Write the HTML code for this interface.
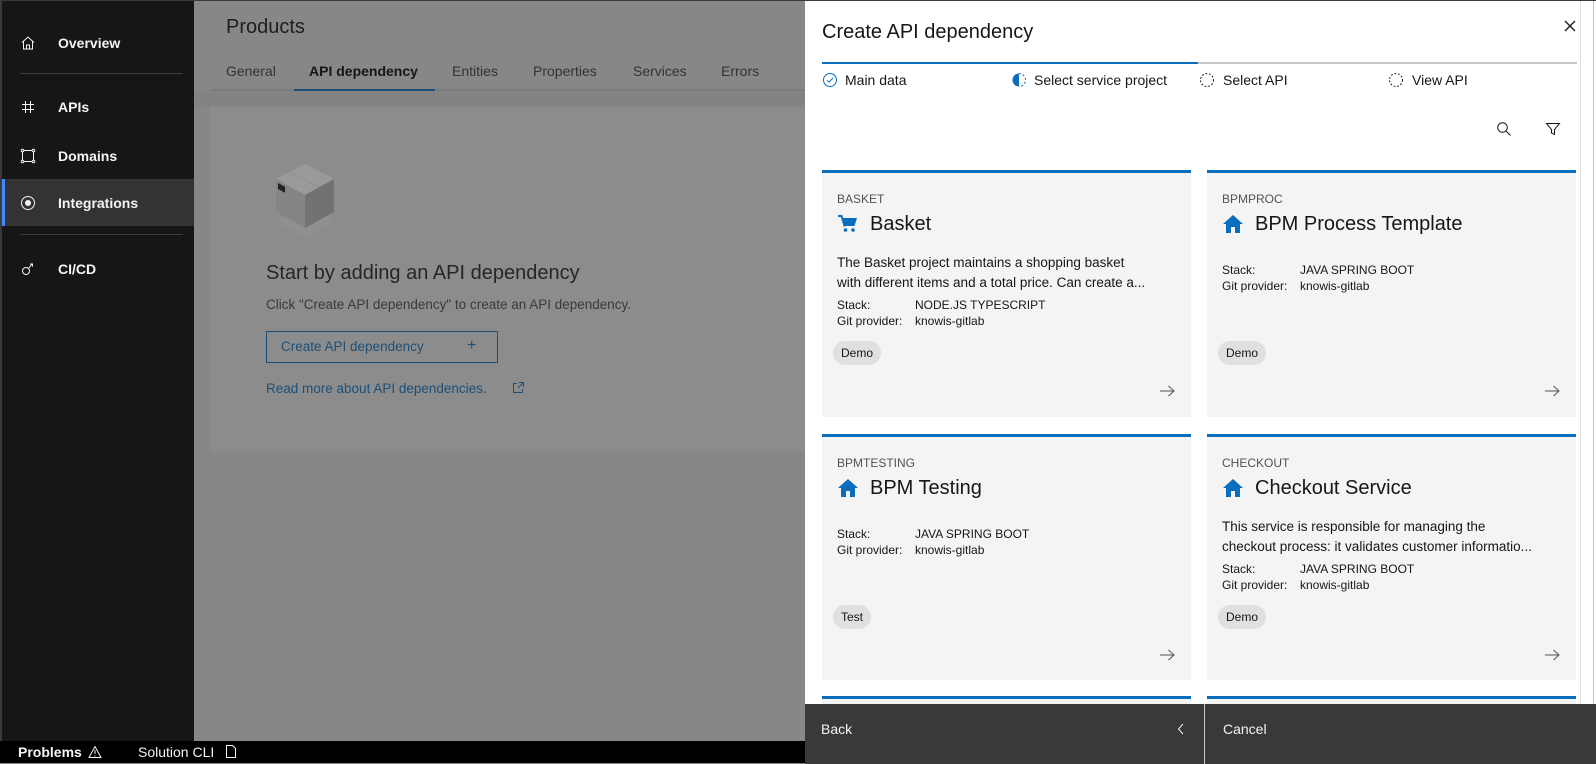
<!DOCTYPE html>
<html><head><meta charset="utf-8"><style>
*{box-sizing:border-box;margin:0;padding:0}
body{width:1596px;height:763px;overflow:hidden;position:relative;font-family:"Liberation Sans",sans-serif;background:#868686}
.abs{position:absolute}
.side{left:0;top:0;width:194px;height:741px;background:#161616;border-left:2px solid #3a3a3a;border-top:1px solid #3a3a3a}
.nav{position:absolute;left:0;width:192px;height:46px;color:#f4f4f4;font-size:14px;font-weight:bold}
.nav span{position:absolute;left:56px;top:50%;transform:translateY(-50%)}
.nav svg{position:absolute;left:18px;top:50%;transform:translateY(-50%)}
.div{position:absolute;left:18px;width:163px;height:1px;background:#3d3d3d}
.status{left:0;top:741px;width:1596px;height:22px;background:#000;color:#f4f4f4;font-size:14px}
.main{left:194px;top:0;width:611px;height:741px;background:#878787;border-top:1px solid #3a3a3a}
.t{position:absolute;white-space:nowrap}
.panel{left:805px;top:0;width:791px;height:763px;background:#fff;border-top:1px solid #3a3a3a}
.card{position:absolute;width:369px;background:#f4f4f4;border-top:3px solid #0a6ebd}
.card .lbl{position:absolute;left:15px;top:19px;font-size:12px;color:#525252}
.card .ttl{position:absolute;left:48px;top:40px;font-size:20px;color:#161616}
.card .ico{position:absolute;left:16px;top:42px}
.card .desc{position:absolute;left:15px;top:80px;font-size:13.5px;line-height:20px;color:#161616;white-space:nowrap}
.card .meta{position:absolute;left:15px;font-size:12px;line-height:16px;color:#161616}
.card .meta b{font-weight:normal;display:inline-block;width:78px}
.card .tag{position:absolute;left:11px;top:168px;height:24px;padding:0 8px;border-radius:12px;background:#e0e0e0;font-size:12px;line-height:24px;color:#161616}
.card .arr{position:absolute;right:16px;top:212px}
</style></head><body>

<div class="abs side">
  <div class="nav" style="top:19px"><svg width="16" height="16" viewBox="0 0 16 16" fill="none" stroke="#f4f4f4" stroke-width="1"><path d="M2 7.5L8 2l6 5.5M3.5 6.5V14h9V6.5M6.5 14v-4h3v4"/></svg><span>Overview</span></div>
  <div class="div" style="top:72px"></div>
  <div class="nav" style="top:83px"><svg width="16" height="16" viewBox="0 0 16 16" fill="none" stroke="#f4f4f4"><path d="M5.5 2v12M10.5 2v12M2 5.5h12M2 10.5h12"/></svg><span>APIs</span></div>
  <div class="nav" style="top:132px"><svg width="16" height="16" viewBox="0 0 16 16" fill="none" stroke="#f4f4f4"><rect x="2.5" y="2.5" width="11" height="11"/><circle cx="2.5" cy="2.5" r="1.3" fill="#161616"/><circle cx="13.5" cy="2.5" r="1.3" fill="#161616"/><circle cx="2.5" cy="13.5" r="1.3" fill="#161616"/><circle cx="13.5" cy="13.5" r="1.3" fill="#161616"/></svg><span>Domains</span></div>
  <div class="nav" style="top:178px;background:#333;height:47px"><div style="position:absolute;left:0;top:0;width:3px;height:47px;background:#4589ff"></div><svg width="16" height="16" viewBox="0 0 16 16" fill="none" stroke="#f4f4f4"><circle cx="8" cy="8" r="6.5"/><circle cx="8" cy="8" r="2.5" fill="#f4f4f4"/></svg><span>Integrations</span></div>
  <div class="div" style="top:233px"></div>
  <div class="nav" style="top:245px"><svg width="16" height="16" viewBox="0 0 16 16" fill="none" stroke="#f4f4f4"><circle cx="6" cy="10" r="3.5"/><path d="M8.5 7.5L12 3M10 3h2.5v2.5"/></svg><span>CI/CD</span></div>
</div>

<div class="abs status">
  <span class="t" style="left:18px;top:3px;font-weight:bold">Problems</span>
  <svg class="abs" style="left:88px;top:4px" width="14" height="14" viewBox="0 0 14 14" fill="none" stroke="#f4f4f4"><path d="M7 1.5L13 12.5H1z M7 5v4 M7 10.5v1"/></svg>
  <span class="t" style="left:138px;top:3px">Solution CLI</span>
  <svg class="abs" style="left:225px;top:3px" width="12" height="15" viewBox="0 0 12 15" fill="none" stroke="#f4f4f4"><path d="M1.5 1.5h6l3 3v9h-9z"/></svg>
</div>

<div class="abs main">
  <div class="t" style="left:32px;top:15px;font-size:20px;color:#1e1e1e">Products</div>
  <div class="t" style="left:32px;top:62px;font-size:14px;color:#333">General</div>
  <div class="t" style="left:115px;top:62px;font-size:14px;color:#161616;font-weight:bold">API dependency</div>
  <div class="t" style="left:258px;top:62px;font-size:14px;color:#333">Entities</div>
  <div class="t" style="left:339px;top:62px;font-size:14px;color:#333">Properties</div>
  <div class="t" style="left:439px;top:62px;font-size:14px;color:#333">Services</div>
  <div class="t" style="left:527px;top:62px;font-size:14px;color:#333">Errors</div>
  <div class="abs" style="left:16px;top:88px;width:595px;height:2px;background:#7c7c7c"></div>
  <div class="abs" style="left:100px;top:88px;width:141px;height:2px;background:#1d4f78"></div>
  <div class="abs" style="left:0;top:90px;width:611px;height:16px;background:#838383"></div>
  <div class="abs" style="left:16px;top:106px;width:595px;height:345px;background:#8c8c8c"></div>
  <svg class="abs" style="left:80px;top:162px" width="62" height="78" viewBox="0 0 62 78"><path d="M2 58l29 17 29-17-29-17z" fill="#909090"/><path d="M2 16l29-15 29 15-29 16z" fill="#9a9a9a"/><path d="M2 16l29 16v33L2 49z" fill="#858585"/><path d="M31 32l29-16v33L31 65z" fill="#727272"/><path d="M16 9l29 15" stroke="#888" stroke-width="0.7"/><rect x="4" y="20" width="7" height="6" fill="#222" transform="skewY(28)" style="transform-origin:4px 20px"/></svg>
  <div class="t" style="left:72px;top:261px;font-size:20px;color:#262626">Start by adding an API dependency</div>
  <div class="t" style="left:72px;top:296px;font-size:13.5px;color:#3a3a3a">Click "Create API dependency" to create an API dependency.</div>
  <div class="abs" style="left:72px;top:330px;width:232px;height:32px;border:1px solid #1d4f78"></div>
  <div class="t" style="left:87px;top:338px;font-size:13.5px;color:#1d4f78">Create API dependency</div>
  <div class="t" style="left:273px;top:336px;font-size:16px;color:#1d4f78">+</div>
  <div class="t" style="left:72px;top:380px;font-size:13.5px;color:#1d4f78">Read more about API dependencies.</div>
  <svg class="abs" style="left:317px;top:380px" width="14" height="14" viewBox="0 0 14 14" fill="none" stroke="#1d4f78"><path d="M6 2.5H2.5v9h9V8M8 1.5h4.5V6M12.5 1.5L7 7"/></svg>
</div>

<div class="abs panel">
  <div class="t" style="left:17px;top:20px;font-size:20px;color:#161616">Create API dependency</div>
  <svg class="abs" style="left:758px;top:18px" width="14" height="14" viewBox="0 0 14 14" stroke="#161616" stroke-width="1.3"><path d="M2 2l10 10M12 2L2 12"/></svg>
  <div class="abs" style="left:17px;top:61px;width:376px;height:2px;background:#0a6ebd"></div>
  <div class="abs" style="left:393px;top:61px;width:379px;height:2px;background:#c6c6c6"></div>
  <svg class="abs" style="left:17px;top:71px" width="16" height="16" viewBox="0 0 16 16" fill="none" stroke="#0a6ebd"><circle cx="8" cy="8" r="6.5"/><path d="M5 8.2l2 2 4-4.2"/></svg>
  <div class="t" style="left:40px;top:71px;font-size:14px;color:#161616">Main data</div>
  <svg class="abs" style="left:206px;top:71px" width="16" height="16" viewBox="0 0 16 16"><path d="M8 1.5a6.5 6.5 0 0 0 0 13z" fill="#0a6ebd"/><path d="M8 1.5a6.5 6.5 0 0 1 0 13" fill="none" stroke="#0a6ebd" stroke-dasharray="2 2"/></svg>
  <div class="t" style="left:229px;top:71px;font-size:14px;color:#161616">Select service project</div>
  <svg class="abs" style="left:394px;top:71px" width="16" height="16" viewBox="0 0 16 16"><circle cx="8" cy="8" r="6.5" fill="none" stroke="#161616" stroke-dasharray="1.8 1.8"/></svg>
  <div class="t" style="left:418px;top:71px;font-size:14px;color:#161616">Select API</div>
  <svg class="abs" style="left:583px;top:71px" width="16" height="16" viewBox="0 0 16 16"><circle cx="8" cy="8" r="6.5" fill="none" stroke="#161616" stroke-dasharray="1.8 1.8"/></svg>
  <div class="t" style="left:607px;top:71px;font-size:14px;color:#161616">View API</div>
  <svg class="abs" style="left:691px;top:120px" width="16" height="16" viewBox="0 0 16 16" fill="none" stroke="#161616"><circle cx="6.5" cy="6.5" r="4.8"/><path d="M10 10l4.5 4.5"/></svg>
  <svg class="abs" style="left:740px;top:120px" width="16" height="16" viewBox="0 0 16 16" fill="none" stroke="#161616"><path d="M1.5 2.5h13L9.5 8.5v5l-3-1.5V8.5z"/></svg>

  <div class="card" style="left:17px;top:169px;height:247px">
    <div class="lbl">BASKET</div>
    <svg class="ico" width="20" height="18" viewBox="0 0 20 18"><path d="M5 3h14l-2.5 8h-10z" fill="#0a6ebd"/><circle cx="7.5" cy="15" r="1.8" fill="#0a6ebd"/><circle cx="15" cy="15" r="1.8" fill="#0a6ebd"/><path d="M0 1h3.5l3.2 10.5" stroke="#0a6ebd" stroke-width="2" fill="none"/></svg>
    <div class="ttl">Basket</div>
    <div class="desc">The Basket project maintains a shopping basket<br>with different items and a total price. Can create a...</div>
    <div class="meta" style="top:124px"><b>Stack:</b>NODE.JS TYPESCRIPT<br><b>Git provider:</b>knowis-gitlab</div>
    <div class="tag">Demo</div>
    <svg class="arr" width="16" height="12" viewBox="0 0 16 12" fill="none" stroke="#525252"><path d="M1 6h14M9.5 1l5.5 5-5.5 5"/></svg>
  </div>
  <div class="card" style="left:402px;top:169px;height:247px">
    <div class="lbl">BPMPROC</div>
    <svg class="ico" width="20" height="18" viewBox="0 0 20 18"><path d="M10 0L0 9h3v9h5v-6h4v6h5V9h3z" fill="#0a6ebd"/></svg>
    <div class="ttl">BPM Process Template</div>
    <div class="meta" style="top:89px"><b>Stack:</b>JAVA SPRING BOOT<br><b>Git provider:</b>knowis-gitlab</div>
    <div class="tag">Demo</div>
    <svg class="arr" width="16" height="12" viewBox="0 0 16 12" fill="none" stroke="#525252"><path d="M1 6h14M9.5 1l5.5 5-5.5 5"/></svg>
  </div>
  <div class="card" style="left:17px;top:433px;height:246px">
    <div class="lbl">BPMTESTING</div>
    <svg class="ico" width="20" height="18" viewBox="0 0 20 18"><path d="M10 0L0 9h3v9h5v-6h4v6h5V9h3z" fill="#0a6ebd"/></svg>
    <div class="ttl">BPM Testing</div>
    <div class="meta" style="top:89px"><b>Stack:</b>JAVA SPRING BOOT<br><b>Git provider:</b>knowis-gitlab</div>
    <div class="tag">Test</div>
    <svg class="arr" width="16" height="12" viewBox="0 0 16 12" fill="none" stroke="#525252"><path d="M1 6h14M9.5 1l5.5 5-5.5 5"/></svg>
  </div>
  <div class="card" style="left:402px;top:433px;height:246px">
    <div class="lbl">CHECKOUT</div>
    <svg class="ico" width="20" height="18" viewBox="0 0 20 18"><path d="M10 0L0 9h3v9h5v-6h4v6h5V9h3z" fill="#0a6ebd"/></svg>
    <div class="ttl">Checkout Service</div>
    <div class="desc">This service is responsible for managing the<br>checkout process: it validates customer informatio...</div>
    <div class="meta" style="top:124px"><b>Stack:</b>JAVA SPRING BOOT<br><b>Git provider:</b>knowis-gitlab</div>
    <div class="tag">Demo</div>
    <svg class="arr" width="16" height="12" viewBox="0 0 16 12" fill="none" stroke="#525252"><path d="M1 6h14M9.5 1l5.5 5-5.5 5"/></svg>
  </div>
  <div class="card" style="left:17px;top:695px;height:20px"></div>
  <div class="card" style="left:402px;top:695px;height:20px"></div>
  <div class="abs" style="left:775px;top:0;width:1px;height:703px;background:#e0e0e0"></div>
  <div class="abs" style="left:788px;top:0;width:1px;height:703px;background:#c6c6c6"></div>

  <div class="abs" style="left:0;top:703px;width:399px;height:60px;background:#393939"></div>
  <div class="abs" style="left:400px;top:703px;width:391px;height:60px;background:#393939"></div>
  <div class="abs" style="left:399px;top:703px;width:1px;height:60px;background:#c6c6c6"></div>
  <div class="t" style="left:16px;top:720px;font-size:14px;color:#f4f4f4">Back</div>
  <svg class="abs" style="left:372px;top:722px" width="8" height="12" viewBox="0 0 8 12" fill="none" stroke="#f4f4f4"><path d="M6 1L1.5 6 6 11"/></svg>
  <div class="t" style="left:418px;top:720px;font-size:14px;color:#f4f4f4">Cancel</div>
</div>
</body></html>
